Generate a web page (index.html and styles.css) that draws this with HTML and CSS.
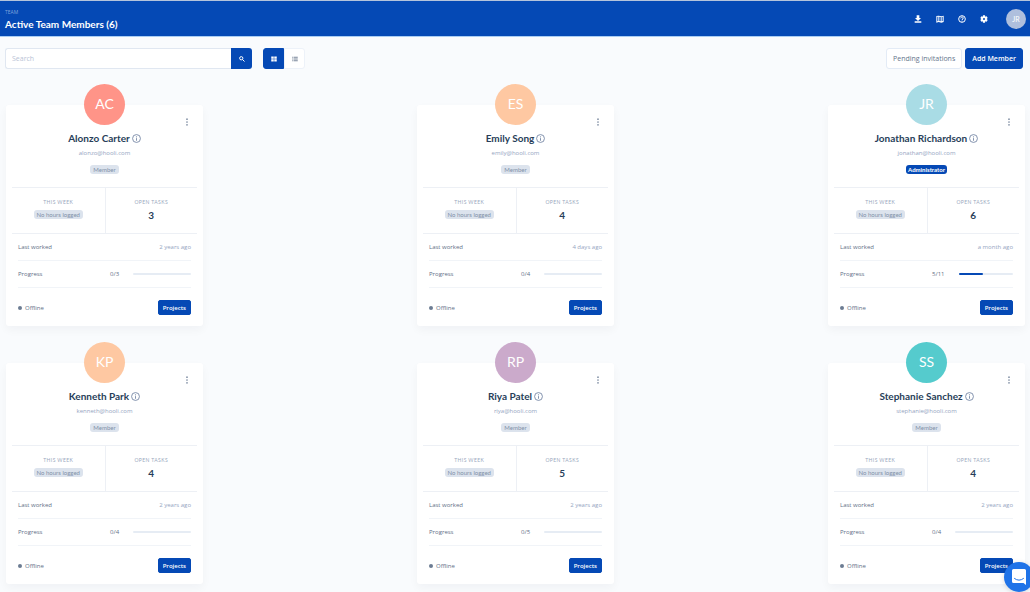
FILE: index.html
```html
<!DOCTYPE html>
<html lang="en">
  <head>
    <meta charset="utf-8">
    <meta name="viewport" content="width=device-width, initial-scale=1">
    <title>Active Team Members</title>
    <link rel="stylesheet" href="styles.css">
  </head>
  <body>
    <svg class="sprite" aria-hidden="true">
      <symbol id="i-download" viewBox="0 0 24 24"><path d="M8 1h8v8h5l-9 9-9-9h5zM2 19h20v4H2z"/></symbol>
      <symbol id="i-map" viewBox="0 0 24 24"><path fill-rule="evenodd" d="M1 3l7-1 8 2 7-2v19l-7 2-8-2-7 2zM4 5v14l3-1V5zM10 5v13l4 1V6zM17 6v13l3-1V5z"/></symbol>
      <symbol id="i-help" viewBox="0 0 24 24"><g fill="none" stroke="currentColor" stroke-width="3"><circle cx="12" cy="12" r="10"/><path d="M8 10c0-5 8-5 8-1 0 3-4 3-4 6"/></g><circle cx="12" cy="18" r="1.8"/></symbol>
      <symbol id="i-gear" viewBox="0 0 24 24"><path fill-rule="evenodd" d="M9 1h6l1 4 4-1 3 5-3 3 3 3-3 5-4-1-1 4H9l-1-4-4 1-3-5 3-3-3-3 3-5 4 1zM12 9a3 3 0 1 0 0 6 3 3 0 0 0 0-6z"/></symbol>
      <symbol id="i-search" viewBox="0 0 24 24"><g fill="none" stroke="currentColor" stroke-width="4"><circle cx="9" cy="9" r="6.5"/><path d="M14 14l8 8"/></g></symbol>
      <symbol id="i-grid" viewBox="0 0 24 24"><path d="M1 2h10v9H1zM13 2h10v9H13zM1 13h10v9H1zM13 13h10v9H13z"/></symbol>
      <symbol id="i-list" viewBox="0 0 24 24"><path d="M1 3h4v4H1zM7 3h16v4H7zM1 10h4v4H1zM7 10h16v4H7zM1 17h4v4H1zM7 17h16v4H7z"/></symbol>
      <symbol id="i-info" viewBox="0 0 24 24"><g fill="none" stroke="currentColor" stroke-width="2.4"><circle cx="12" cy="12" r="10.5"/><path d="M12 11v7"/></g><circle cx="12" cy="7.5" r="1.6"/></symbol>
      <symbol id="i-more" viewBox="0 0 24 24"><circle cx="12" cy="3.5" r="2.6"/><circle cx="12" cy="12" r="2.6"/><circle cx="12" cy="20.5" r="2.6"/></symbol>
    </svg>

    <header class="topbar">
      <div>
        <div class="pretitle">TEAM</div>
        <h1>Active Team Members (6)</h1>
      </div>
      <nav class="topnav">
        <a href="#" aria-label="Download"><svg><use href="#i-download"/></svg></a>
        <a href="#" aria-label="Map"><svg><use href="#i-map"/></svg></a>
        <a href="#" aria-label="Help"><svg><use href="#i-help"/></svg></a>
        <a href="#" aria-label="Settings"><svg><use href="#i-gear"/></svg></a>
        <a href="#" class="me">JR</a>
      </nav>
    </header>

    <div class="toolbar">
      <form class="search">
        <input type="text" placeholder="Search" aria-label="Search">
        <button type="button" aria-label="Search"><svg><use href="#i-search"/></svg></button>
      </form>
      <div class="toggle">
        <button type="button" class="active" aria-label="Grid view"><svg><use href="#i-grid"/></svg></button>
        <button type="button" aria-label="List view"><svg><use href="#i-list"/></svg></button>
      </div>
      <div class="actions">
        <button type="button" class="btn btn-white">Pending invitations</button>
        <button type="button" class="btn">Add Member</button>
      </div>
    </div>

    <main class="members">
      <article class="card">
        <div class="avatar coral">AC</div>
        <button type="button" class="more" aria-label="More"><svg><use href="#i-more"/></svg></button>
        <h2>Alonzo Carter <svg><use href="#i-info"/></svg></h2>
        <div class="email">alonzo@hooli.com</div>
        <div class="role"><span class="badge">Member</span></div>
        <div class="stats">
          <div><h3>THIS WEEK</h3><span class="badge">No hours logged</span></div>
          <div><h3>OPEN TASKS</h3><strong>3</strong></div>
        </div>
        <div class="row"><span>Last worked</span><time>2 years ago</time></div>
        <div class="row"><span class="label">Progress</span><span>0/3</span><div class="bar"></div></div>
        <div class="foot"><span class="status">Offline</span><button type="button" class="btn btn-sm">Projects</button></div>
      </article>

      <article class="card">
        <div class="avatar peach">ES</div>
        <button type="button" class="more" aria-label="More"><svg><use href="#i-more"/></svg></button>
        <h2>Emily Song <svg><use href="#i-info"/></svg></h2>
        <div class="email">emily@hooli.com</div>
        <div class="role"><span class="badge">Member</span></div>
        <div class="stats">
          <div><h3>THIS WEEK</h3><span class="badge">No hours logged</span></div>
          <div><h3>OPEN TASKS</h3><strong>4</strong></div>
        </div>
        <div class="row"><span>Last worked</span><time>4 days ago</time></div>
        <div class="row"><span class="label">Progress</span><span>0/4</span><div class="bar"></div></div>
        <div class="foot"><span class="status">Offline</span><button type="button" class="btn btn-sm">Projects</button></div>
      </article>

      <article class="card">
        <div class="avatar sky">JR</div>
        <button type="button" class="more" aria-label="More"><svg><use href="#i-more"/></svg></button>
        <h2>Jonathan Richardson <svg><use href="#i-info"/></svg></h2>
        <div class="email">jonathan@hooli.com</div>
        <div class="role"><span class="badge badge-admin">Administrator</span></div>
        <div class="stats">
          <div><h3>THIS WEEK</h3><span class="badge">No hours logged</span></div>
          <div><h3>OPEN TASKS</h3><strong>6</strong></div>
        </div>
        <div class="row"><span>Last worked</span><time>a month ago</time></div>
        <div class="row"><span class="label">Progress</span><span>5/11</span><div class="bar"><div style="width: 45%"></div></div></div>
        <div class="foot"><span class="status">Offline</span><button type="button" class="btn btn-sm">Projects</button></div>
      </article>

      <article class="card">
        <div class="avatar peach">KP</div>
        <button type="button" class="more" aria-label="More"><svg><use href="#i-more"/></svg></button>
        <h2>Kenneth Park <svg><use href="#i-info"/></svg></h2>
        <div class="email">kenneth@hooli.com</div>
        <div class="role"><span class="badge">Member</span></div>
        <div class="stats">
          <div><h3>THIS WEEK</h3><span class="badge">No hours logged</span></div>
          <div><h3>OPEN TASKS</h3><strong>4</strong></div>
        </div>
        <div class="row"><span>Last worked</span><time>2 years ago</time></div>
        <div class="row"><span class="label">Progress</span><span>0/4</span><div class="bar"></div></div>
        <div class="foot"><span class="status">Offline</span><button type="button" class="btn btn-sm">Projects</button></div>
      </article>

      <article class="card">
        <div class="avatar mauve">RP</div>
        <button type="button" class="more" aria-label="More"><svg><use href="#i-more"/></svg></button>
        <h2>Riya Patel <svg><use href="#i-info"/></svg></h2>
        <div class="email">riya@hooli.com</div>
        <div class="role"><span class="badge">Member</span></div>
        <div class="stats">
          <div><h3>THIS WEEK</h3><span class="badge">No hours logged</span></div>
          <div><h3>OPEN TASKS</h3><strong>5</strong></div>
        </div>
        <div class="row"><span>Last worked</span><time>2 years ago</time></div>
        <div class="row"><span class="label">Progress</span><span>0/5</span><div class="bar"></div></div>
        <div class="foot"><span class="status">Offline</span><button type="button" class="btn btn-sm">Projects</button></div>
      </article>

      <article class="card">
        <div class="avatar teal">SS</div>
        <button type="button" class="more" aria-label="More"><svg><use href="#i-more"/></svg></button>
        <h2>Stephanie Sanchez <svg><use href="#i-info"/></svg></h2>
        <div class="email">stephanie@hooli.com</div>
        <div class="role"><span class="badge">Member</span></div>
        <div class="stats">
          <div><h3>THIS WEEK</h3><span class="badge">No hours logged</span></div>
          <div><h3>OPEN TASKS</h3><strong>4</strong></div>
        </div>
        <div class="row"><span>Last worked</span><time>2 years ago</time></div>
        <div class="row"><span class="label">Progress</span><span>0/4</span><div class="bar"></div></div>
        <div class="foot"><span class="status">Offline</span><button type="button" class="btn btn-sm">Projects</button></div>
      </article>
    </main>

    <button type="button" class="chat" aria-label="Open chat">
      <svg viewBox="0 0 28 32"><path fill="#fff" d="M3 0h22q3 0 3 3v29l-5-4H3q-3 0-3-3V3q0-3 3-3z"/><path fill="none" stroke="#1f73e8" stroke-width="2" stroke-linecap="round" d="M5 19q9 7 18 0"/></svg>
    </button>
  </body>
</html>
```
FILE: styles.css
```css
* {
    box-sizing: border-box;
}

body {
    margin: 0;
    background: #f9fbfd;
    color: #5f6f87;
    font-family: "Open Sans", "Liberation Sans", sans-serif;
    font-size: 6px;
    line-height: 10px;
}

h1, h2, h3 {
    margin: 0;
}

h1, h2, h3, strong, .avatar, .badge, .me {
    font-family: Lato, "Liberation Sans", sans-serif;
}

button, input {
    font: inherit;
    margin: 0;
    padding: 0;
    border: 0;
}

svg {
    display: block;
    width: 8px;
    height: 8px;
    fill: currentColor;
}

.sprite {
    position: absolute;
    width: 0;
    height: 0;
}

.topbar {
    display: flex;
    justify-content: space-between;
    align-items: center;
    height: 37px;
    padding: 0 5px;
    background: #0549b5;
    border-top: 1px solid #b5c4dc;
    border-bottom: 1px solid #a9cdf3;
}

.pretitle {
    color: #7fa3dc;
    font-size: 5px;
}

h1 {
    color: white;
    font-size: 10px;
    line-height: 14px;
}

.topnav {
    display: flex;
    align-items: center;
    gap: 14px;
}

.topnav a {
    color: white;
    text-decoration: none;
}

.topnav .me {
    width: 20px;
    height: 20px;
    margin-right: -1px;
    margin-left: 4px;
    border-radius: 50%;
    background: #afbfdd;
    font-size: 7px;
    line-height: 20px;
    text-align: center;
}

.toolbar {
    display: flex;
    padding: 11px 7px 0 5px;
}

.search {
    display: flex;
    width: 247px;
}

.search input {
    flex: 1;
    min-width: 0;
    height: 21px;
    padding: 0 6px;
    background: white;
    border: 1px solid #e0e7f1;
    border-right: 0;
    border-radius: 3px 0 0 3px;
    font-size: 7px;
}

.search input::placeholder {
    color: #b9c4d6;
}

.search button, .toggle button {
    display: flex;
    align-items: center;
    justify-content: center;
    width: 21px;
    height: 21px;
    background: #0549b5;
    color: white;
    border-radius: 0 3px 3px 0;
}

.search svg, .toggle svg {
    width: 6px;
    height: 6px;
}

.toggle {
    display: flex;
    margin-left: 11px;
}

.toggle button {
    background: white;
    border: 1px solid #edf2f9;
    color: #7a879a;
}

.toggle .active {
    background: #0549b5;
    border-color: #0549b5;
    border-radius: 3px 0 0 3px;
    color: white;
}

.actions {
    display: flex;
    gap: 3px;
    margin-left: auto;
}

.btn {
    height: 21px;
    padding: 0 6px;
    background: #0549b5;
    border: 1px solid #0549b5;
    border-radius: 3px;
    color: white;
    font-size: 7px;
    font-weight: 600;
}

.btn-white {
    background: white;
    border-color: #e3ebf6;
    color: #66758c;
    font-weight: normal;
}

.btn-sm {
    height: 15px;
    padding: 0 4px;
    border-radius: 2px;
    font-size: 6px;
}

.members {
    display: grid;
    grid-template-columns: repeat(3, 197px);
    justify-content: space-between;
    row-gap: 37px;
    padding: 36px 5px 8px 6px;
}

.card {
    position: relative;
    padding: 0 6px 11px;
    background: white;
    border-radius: 3px;
    box-shadow: 0 4px 10px rgba(18, 38, 63, 0.04);
    text-align: center;
}

.avatar {
    width: 41px;
    height: 41px;
    margin: -21px auto 6px;
    border-radius: 50%;
    color: white;
    font-size: 14px;
    line-height: 40px;
}

.coral { background: #ff9488; }
.peach { background: #fec8a2; }
.sky { background: #a9dce5; }
.mauve { background: #cbaacb; }
.teal { background: #55cbcd; }

.more {
    position: absolute;
    top: 13px;
    right: 12px;
    background: none;
    color: #8290a5;
}

h2 {
    display: flex;
    align-items: center;
    justify-content: center;
    gap: 2px;
    color: #283e59;
    font-size: 10px;
    line-height: 14px;
}

h2 svg {
    width: 9px;
    height: 9px;
    color: #7688a6;
}

.email {
    margin-top: 3px;
    color: #95a5bf;
}

.role {
    display: flex;
    justify-content: center;
    margin-top: 7px;
}

.badge {
    display: inline-block;
    padding: 0 3px;
    background: #dce3ed;
    border-radius: 3px;
    color: #8190a8;
    font-size: 6px;
    line-height: 9px;
}

.badge-admin {
    padding: 0 2px;
    background: #0549b5;
    color: white;
    font-weight: bold;
}

.stats {
    display: grid;
    grid-template-columns: 1fr 1fr;
    margin-top: 13px;
    border-top: 1px solid #edf0f5;
    border-bottom: 1px solid #edf0f5;
}

.stats > div {
    height: 45px;
    padding-top: 10px;
}

.stats > div + div {
    border-left: 1px solid #edf0f5;
}

.stats h3 {
    margin-bottom: 3px;
    color: #9aa8be;
    font-size: 5px;
    font-weight: normal;
    line-height: 9px;
    letter-spacing: 0.08em;
}

.stats strong {
    display: block;
    color: #283e59;
    font-size: 10px;
}

.row {
    display: flex;
    align-items: center;
    height: 27px;
    margin: 0 6px;
    border-bottom: 1px solid #f1f4f8;
}

.row time {
    margin-left: auto;
    color: #95a5bf;
}

.row .label {
    width: 92px;
    text-align: left;
}

.bar {
    flex: 1;
    height: 2px;
    margin-left: 14px;
    background: #e6ecf4;
    border-radius: 2px;
}

.bar div {
    height: 100%;
    background: #0549b5;
    border-radius: 2px;
}

.foot {
    display: flex;
    align-items: center;
    justify-content: space-between;
    margin: 12px 6px 0;
}

.status::before {
    content: "";
    display: inline-block;
    width: 4px;
    height: 4px;
    margin-right: 3px;
    border-radius: 50%;
    background: #6c7c93;
}

.chat {
    position: fixed;
    right: -4px;
    bottom: 0;
    display: flex;
    align-items: center;
    justify-content: center;
    width: 30px;
    height: 30px;
    border-radius: 50%;
    background: #1f73e8;
    box-shadow: 0 1px 5px rgba(0, 0, 0, 0.15);
}

.chat svg {
    width: 14px;
    height: 16px;
}
```
